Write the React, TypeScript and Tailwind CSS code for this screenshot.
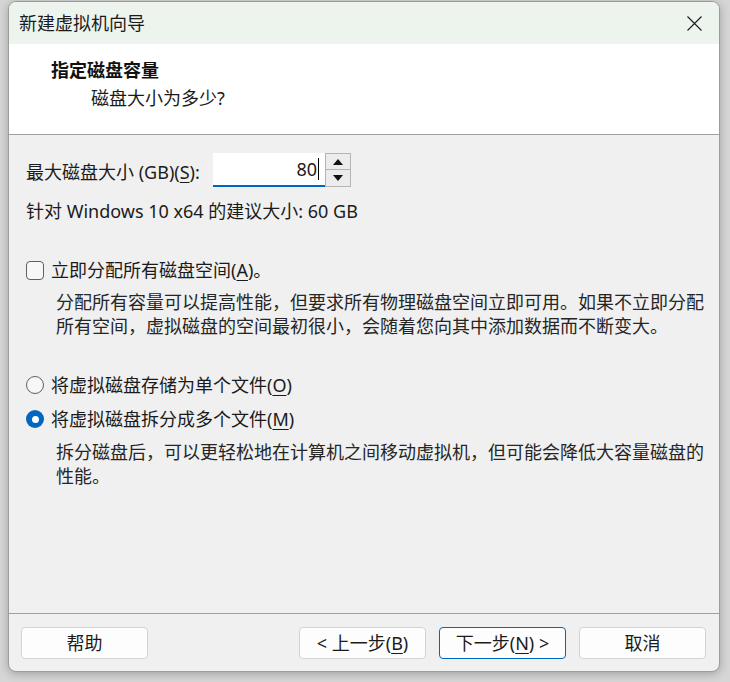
import React from "react";

const FONT = { fontFamily: '"Noto Sans", "Noto Sans CJK SC", sans-serif' };

function Mn({ children }: { children: React.ReactNode }) {
  return <span className="underline underline-offset-[3px] decoration-[1px]">{children}</span>;
}

function Btn({ children, primary }: { children: React.ReactNode; primary?: boolean }) {
  return (
    <button
      className={`flex h-[32px] w-[127px] items-center justify-center rounded-[4px] bg-[#fdfdfd] text-[18px] leading-none text-[#1b1b1b] ${
        primary ? "border border-[#0067c0]" : "border border-[#d3d3d3]"
      }`}
    >
      {children}
    </button>
  );
}

function SpinBox() {
  return (
    <div className="flex h-[34px]">
      <div className="relative flex h-[34px] w-[112px] items-center justify-end border-b-2 border-[#0067c0] bg-white pr-[6px] text-[18px] leading-none text-[#1b1b1b]">
        80
        <span className="ml-[1px] inline-block h-[22px] w-px bg-black" />
      </div>
      <div className="flex w-[26px] flex-col border border-[#b4b4b4] bg-[#ececec]">
        <div className="flex h-1/2 items-center justify-center border-b border-[#b4b4b4]">
          <svg width="10" height="6" viewBox="0 0 10 6">
            <path d="M0 6 L5 0 L10 6 Z" fill="#111" />
          </svg>
        </div>
        <div className="flex h-1/2 items-center justify-center">
          <svg width="10" height="6" viewBox="0 0 10 6">
            <path d="M0 0 L5 6 L10 0 Z" fill="#111" />
          </svg>
        </div>
      </div>
    </div>
  );
}

export default function App() {
  return (
    <div className="h-[682px] w-[730px] overflow-hidden bg-[#d6d6d6] pt-[1px]" style={FONT}>
      <div className="ml-[8px] flex h-[671px] w-[712px] flex-col overflow-hidden rounded-[8px] border border-[#9c9c9c] bg-[#f0f0f0] shadow-[0_2px_10px_rgba(0,0,0,0.25)]">
        {/* title bar */}
        <div className="flex h-[42px] shrink-0 items-center justify-between bg-[#edf4ee] pl-[10px] pr-[17px]">
          <span className="text-[18px] leading-none text-[#1b1b1b]">新建虚拟机向导</span>
          <svg width="15" height="15" viewBox="0 0 15 15">
            <path d="M0.5 0.5 L14.5 14.5 M14.5 0.5 L0.5 14.5" stroke="#1b1b1b" strokeWidth="1.1" />
          </svg>
        </div>

        {/* header */}
        <div className="h-[91px] shrink-0 border-b border-[#a0a0a0] bg-white pl-[42px] pt-[14px]">
          <div className="text-[18px] font-bold leading-[24px] text-[#111]">指定磁盘容量</div>
          <div className="pl-[40px] pt-[4px] text-[18px] leading-[24px] text-[#1b1b1b]">磁盘大小为多少?</div>
        </div>

        {/* body */}
        <div className="flex flex-1 flex-col pl-[17px] text-[18px] leading-[24px] text-[#1b1b1b]">
          <div className="mt-[18px] flex items-center">
            <span className="mt-[3px] w-[187px]">
              最大磁盘大小 (GB)(<Mn>S</Mn>):
            </span>
            <SpinBox />
          </div>
          <div className="mt-[12px]">针对 Windows 10 x64 的建议大小: 60 GB</div>

          <div className="mt-[35px] flex items-center">
            <span className="h-[19px] w-[18px] rounded-[4px] border border-[#5f5f5f] bg-[#f7f7f7]" />
            <span className="ml-[7px]">
              立即分配所有磁盘空间(<Mn>A</Mn>)。
            </span>
          </div>
          <div className="ml-[30px] mt-[8px] w-[655px] text-[#262626]">
            分配所有容量可以提高性能，但要求所有物理磁盘空间立即可用。如果不立即分配所有空间，虚拟磁盘的空间最初很小，会随着您向其中添加数据而不断变大。
          </div>

          <div className="mt-[35px] flex items-center">
            <span className="h-[18px] w-[18px] rounded-full border border-[#5f5f5f] bg-[#f7f7f7]" />
            <span className="ml-[7px]">
              将虚拟磁盘存储为单个文件(<Mn>O</Mn>)
            </span>
          </div>
          <div className="mt-[10px] flex items-center">
            <span className="flex h-[18px] w-[18px] items-center justify-center rounded-full bg-[#0067c0]">
              <span className="h-[7px] w-[7px] rounded-full bg-white" />
            </span>
            <span className="ml-[7px]">
              将虚拟磁盘拆分成多个文件(<Mn>M</Mn>)
            </span>
          </div>
          <div className="ml-[30px] mt-[9px] w-[655px] text-[#262626]">
            拆分磁盘后，可以更轻松地在计算机之间移动虚拟机，但可能会降低大容量磁盘的性能。
          </div>
        </div>

        {/* footer */}
        <div className="flex h-[58px] shrink-0 items-start border-t border-[#a0a0a0] pl-[12px] pt-[13px]">
          <Btn>帮助</Btn>
          <div className="ml-[151px] flex gap-[13px]">
            <Btn>
              &lt; 上一步(<Mn>B</Mn>)
            </Btn>
            <Btn primary>
              下一步(<Mn>N</Mn>) &gt;
            </Btn>
            <Btn>取消</Btn>
          </div>
        </div>
      </div>
    </div>
  );
}
